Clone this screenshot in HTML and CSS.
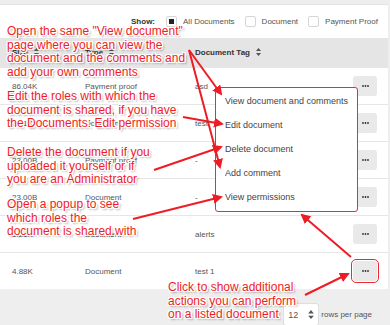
FILE: index.html
```html
<!DOCTYPE html>
<html lang="en">
<head>
  <meta charset="UTF-8" />
  <meta name="viewport" content="width=device-width, initial-scale=1.0" />
  <title>Documents</title>
  <link rel="stylesheet" href="styles.css">
</head>
<body>
<div class="page">
  <div class="card">
    <!-- Filters -->
    <div class="filters">
      <span class="show-label">Show:</span>
      <span class="filter"><span class="box checked"></span>All Documents</span>
      <span class="filter"><span class="box"></span>Document</span>
      <span class="filter"><span class="box"></span>Payment Proof</span>
    </div>

    <!-- Document list -->
    <div class="table">
      <div class="row head">
        <div>Size <svg class="sort" width="5" height="8" viewBox="0 0 5 8"><path d="M2.5 0 5 3H0zM2.5 8 0 5h5z"/></svg></div>
        <div>Type <svg class="sort" width="5" height="8" viewBox="0 0 5 8"><path d="M2.5 0 5 3H0zM2.5 8 0 5h5z"/></svg></div>
        <div>Document Tag <svg class="sort" width="5" height="8" viewBox="0 0 5 8"><path d="M2.5 0 5 3H0zM2.5 8 0 5h5z"/></svg></div>
        <div></div>
      </div>
      <div class="row">
        <div>86.04K</div><div>Payment proof</div><div>asd</div>
        <button class="more"><svg width="7" height="2" viewBox="0 0 7 2"><circle cx="1" cy="1" r="0.9"/><circle cx="3.5" cy="1" r="0.9"/><circle cx="6" cy="1" r="0.9"/></svg></button>
      </div>
      <div class="row">
        <div>2.51K</div><div>Document</div><div>test</div>
        <button class="more"><svg width="7" height="2" viewBox="0 0 7 2"><circle cx="1" cy="1" r="0.9"/><circle cx="3.5" cy="1" r="0.9"/><circle cx="6" cy="1" r="0.9"/></svg></button>
      </div>
      <div class="row">
        <div>23.00B</div><div>Payment proof</div><div>-</div>
        <button class="more"><svg width="7" height="2" viewBox="0 0 7 2"><circle cx="1" cy="1" r="0.9"/><circle cx="3.5" cy="1" r="0.9"/><circle cx="6" cy="1" r="0.9"/></svg></button>
      </div>
      <div class="row">
        <div>23.00B</div><div>Document</div><div>-</div>
        <button class="more"><svg width="7" height="2" viewBox="0 0 7 2"><circle cx="1" cy="1" r="0.9"/><circle cx="3.5" cy="1" r="0.9"/><circle cx="6" cy="1" r="0.9"/></svg></button>
      </div>
      <div class="row">
        <div>1.21K</div><div>Document</div><div>alerts</div>
        <button class="more"><svg width="7" height="2" viewBox="0 0 7 2"><circle cx="1" cy="1" r="0.9"/><circle cx="3.5" cy="1" r="0.9"/><circle cx="6" cy="1" r="0.9"/></svg></button>
      </div>
      <div class="row">
        <div>4.88K</div><div>Document</div><div>test 1</div>
        <button class="more marked"><svg width="7" height="2" viewBox="0 0 7 2"><circle cx="1" cy="1" r="0.9"/><circle cx="3.5" cy="1" r="0.9"/><circle cx="6" cy="1" r="0.9"/></svg></button>
      </div>
    </div>

    <!-- Open action menu -->
    <ul class="menu">
      <li>View document and comments</li>
      <li>Edit document</li>
      <li>Delete document</li>
      <li>Add comment</li>
      <li>View permissions</li>
    </ul>
  </div>

  <div class="pager">
    <span class="select">12 <svg class="sort" width="6" height="9" viewBox="0 0 5 8"><path d="M2.5 0 5 3H0zM2.5 8 0 5h5z"/></svg></span>
    <span>rows per page</span>
  </div>

  <!-- Annotations -->
  <svg class="arrows" width="390" height="325">
    <defs>
      <marker id="head" markerWidth="5" markerHeight="5" refX="4" refY="2.5" orient="auto" markerUnits="strokeWidth">
        <path d="M0 0 5 2.5 0 5z" fill="#ee1c25"/>
      </marker>
    </defs>
    <line x1="189" y1="50" x2="221" y2="94" marker-end="url(#head)"/>
    <line x1="189" y1="50" x2="220" y2="167" marker-end="url(#head)"/>
    <line x1="183" y1="117" x2="222" y2="124" marker-end="url(#head)"/>
    <line x1="154" y1="170" x2="221" y2="147" marker-end="url(#head)"/>
    <line x1="133" y1="219" x2="221" y2="197" marker-end="url(#head)"/>
    <line x1="351" y1="257" x2="302" y2="215" marker-end="url(#head)"/>
    <line x1="305" y1="295" x2="348" y2="274" marker-end="url(#head)"/>
  </svg>
  <p class="note note-view">Open the same "View document"<br>page where you can view the<br>document and the comments and<br>add your own comments</p>
  <p class="note note-edit">Edit the roles with which the<br>document is shared, if you have<br>the Documents: Edit permission</p>
  <p class="note note-delete">Delete the document if you<br>uploaded it yourself or if<br>you are an Administrator</p>
  <p class="note note-perm">Open a popup to see<br>which roles the<br>document is shared with</p>
  <p class="note note-more">Click to show additional<br>actions you can perform<br>on a listed document</p>
</div>
</body>
</html>
```

FILE: styles.css
```css
body {
  margin: 0;
  background: #eeeeee;
  font-family: "Liberation Sans", Arial, sans-serif;
}

.page {
  position: relative;
  width: 390px;
  height: 325px;
  overflow: hidden;
}

/* White card with the table */
.card {
  position: relative;
  margin: 4px 2px 0 0;
  background: #fff;
  border-top: 1px solid #e2e2e2;
}

.filters {
  display: flex;
  align-items: center;
  justify-content: flex-end;
  height: 33px;
  padding-right: 10px;
  font-size: 8px;
  color: #555;
}

.show-label {
  font-weight: bold;
  color: #333;
  margin-right: 11px;
}

.filter {
  display: flex;
  align-items: center;
  margin-right: 10px;
}

.filter:last-child {
  margin-right: 0;
}

.box {
  display: inline-flex;
  align-items: center;
  justify-content: center;
  box-sizing: border-box;
  width: 11px;
  height: 11px;
  border: 1px solid #d6d6d6;
  border-radius: 2px;
  background: #fff;
  margin-right: 6px;
}

.box.checked::after {
  content: "";
  width: 5px;
  height: 5px;
  background: #222;
}

/* Table */
.row {
  display: grid;
  grid-template-columns: 73px 110px 1fr 24px;
  align-items: center;
  height: 37px;
  padding: 0 11px 0 12px;
  border-top: 1px solid #e6e6e6;
  box-sizing: border-box;
  font-size: 8px;
  color: #555;
}

.row.head {
  height: 29px;
  background: #e5e5e5;
  border-top: none;
  font-weight: bold;
  color: #333;
}

.sort {
  fill: #555;
  margin-left: 4px;
  vertical-align: -1px;
}

.more {
  display: flex;
  align-items: center;
  justify-content: center;
  width: 24px;
  height: 20px;
  padding: 0;
  border: none;
  border-radius: 3px;
  background: #e9e9e9;
  fill: #333;
}

.more.marked {
  outline: 1.5px solid #ee2a35;
  outline-offset: 1px;
}

/* Action menu */
.menu {
  position: absolute;
  top: 82px;
  left: 215px;
  width: 143px;
  height: 125px;
  box-sizing: border-box;
  margin: 0;
  padding: 1px 0 0 9px;
  list-style: none;
  background: #fff;
  border: 1.5px solid #ee2a35;
  border-radius: 3px;
  font-size: 9px;
  color: #444;
}

.menu li {
  height: 24px;
  line-height: 24px;
}

/* Rows per page */
.pager {
  display: flex;
  align-items: center;
  justify-content: flex-end;
  gap: 2px;
  padding: 14px 18px 0 0;
  font-size: 8px;
  color: #555;
}

.select {
  display: flex;
  align-items: center;
  justify-content: space-between;
  box-sizing: border-box;
  width: 36px;
  height: 23px;
  padding: 0 4px;
  background: #fff;
  border: 1px solid #dedede;
  border-radius: 3px;
  font-size: 9px;
}

/* Annotations */
.arrows {
  position: absolute;
  top: 0;
  left: 0;
}

.arrows line {
  stroke: #ee1c25;
  stroke-width: 2;
}

.note {
  position: absolute;
  margin: 0;
  font-size: 12px;
  line-height: 13.7px;
  color: #ef1c24;
  white-space: nowrap;
  text-shadow: 1px 0 0 #fff, -1px 0 0 #fff, 0 1px 0 #fff, 0 -1px 0 #fff,
    1px 1px 0 #fff, -1px -1px 0 #fff, 1px -1px 0 #fff, -1px 1px 0 #fff,
    2px 2px 2px rgba(0, 0, 0, 0.35);
}

.note-view { top: 25px; left: 7px; }
.note-edit { top: 90px; left: 7px; }
.note-delete { top: 146px; left: 7px; }
.note-perm { top: 198px; left: 7px; }
.note-more { top: 281px; left: 168px; }
```
